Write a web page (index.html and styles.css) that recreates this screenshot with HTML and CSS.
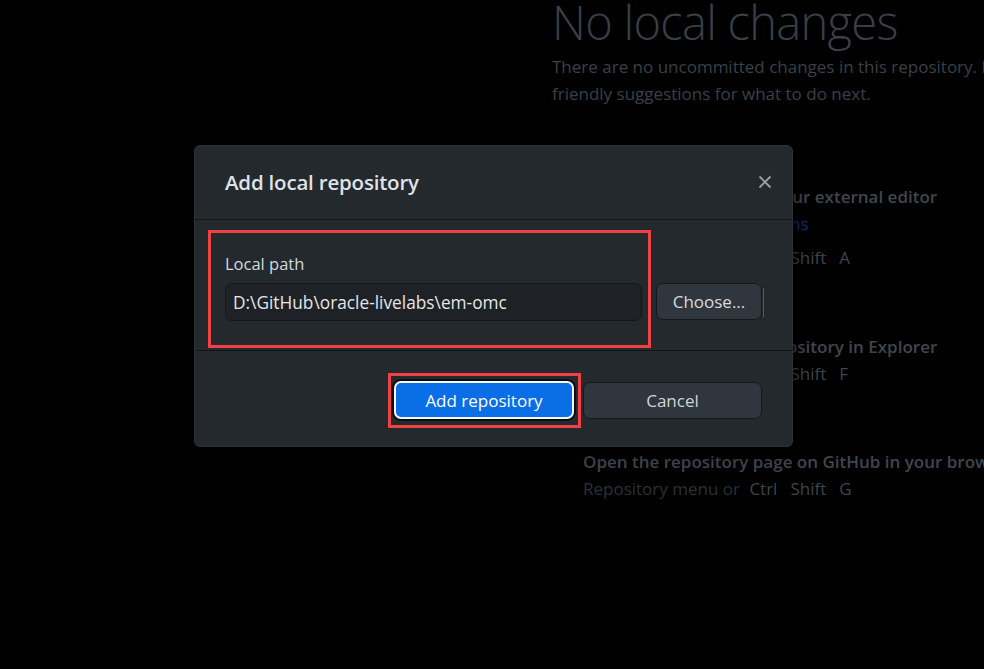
FILE: index.html
```html
<!DOCTYPE html>
<html>
<head>
<meta charset="utf-8">
<link rel="stylesheet" href="styles.css">
</head>
<body>
<div class="app">
  <div class="blank">
    <h1 class="big">No local changes</h1>
    <p class="lead">There are no uncommitted changes in this repository. Here are some</p>
    <p class="lead">friendly suggestions for what to do next.</p>
    <div class="actions">
      <div class="action a1">
        <div class="act-title">Open the repository in your external editor</div>
        <div class="act-link">Select your editor in Options</div>
        <div class="act-desc spaced">Repository menu or <span class="kbd">Ctrl</span><span class="kbd">Shift</span><span class="kbd">A</span></div>
      </div>
      <div class="action a2">
        <div class="act-title">View the files of your repository in Explorer</div>
        <div class="act-desc">Repository menu or <span class="kbd">Ctrl</span><span class="kbd">Shift</span><span class="kbd">F</span></div>
      </div>
      <div class="action a3">
        <div class="act-title">Open the repository page on GitHub in your browser</div>
        <div class="act-desc">Repository menu or <span class="kbd">Ctrl</span><span class="kbd">Shift</span><span class="kbd">G</span></div>
      </div>
    </div>
  </div>

  <div class="dialog">
    <div class="dlg-header">
      <h2 class="dlg-title">Add local repository</h2>
      <svg class="close" width="16" height="16" viewBox="0 0 16 16"><path d="M2.5 2.5 L13.5 13.5 M13.5 2.5 L2.5 13.5" stroke="#9aa0a6" stroke-width="1.8" fill="none"/></svg>
    </div>
    <div class="dlg-body">
      <div class="field">
        <label class="label">Local path</label>
        <div class="input">D:\GitHub\oracle-livelabs\em-omc</div>
      </div>
      <button class="btn choose">Choose...</button>
      <span class="sliver"></span>
    </div>
    <div class="dlg-footer">
      <button class="btn primary">Add repository</button>
      <button class="btn cancel">Cancel</button>
    </div>
    <div class="hl hl-path"></div>
    <div class="hl hl-add"></div>
  </div>
</div>
</body>
</html>
```
FILE: styles.css
```css
* { box-sizing: border-box; }
html, body { margin: 0; padding: 0; background: #000; }
body {
  width: 984px; height: 669px; overflow: hidden;
  font-family: "Open Sans", "Noto Sans", sans-serif;
}
.app { position: relative; width: 984px; height: 669px; overflow: hidden; }

.blank { padding-left: 552px; white-space: nowrap; }
.big {
  margin: -8px 0 0 0;
  font-size: 47px; font-weight: 300; color: #393f46;
  letter-spacing: -0.7px; line-height: 60px;
}
.lead { margin: 0; font-size: 17px; color: #3a4047; line-height: 27px; }
.lead:first-of-type { margin-top: 1px; }

.actions { margin-left: 31px; margin-top: 76px; }
.act-title { font-size: 17px; font-weight: 600; color: #40464d; line-height: 27px; }
.act-link { font-size: 17px; color: #0c2f7a; line-height: 27px; }
.act-desc { font-size: 17px; color: #2b3036; line-height: 27px; }
.act-desc.spaced { margin-top: 7px; }
.kbd { color: #3e454c; margin-left: 5px; }
.kbd + .kbd { margin-left: 13px; }
.a1 { height: 150px; }
.a2 { height: 115px; }
.a3 { height: 60px; }

.dialog {
  position: absolute; left: 194px; top: 145px;
  width: 599px; height: 302px;
  background: #24292e;
  border: 1px solid #2d3237;
  border-radius: 6px;
  box-shadow: 0 4px 16px rgba(0,0,0,0.8);
  display: flex; flex-direction: column;
}
.dlg-header {
  height: 74px; flex: none;
  display: flex; align-items: center; justify-content: space-between;
  padding: 0 19px 0 30px;
  border-bottom: 1px solid #141414;
}
.dlg-title {
  margin: 0 0 2px 0; font-size: 20.5px; font-weight: 600; color: #dfe2e6;
  letter-spacing: -0.2px;
}
.close { margin-top: -1px; }

.dlg-body {
  height: 131px; flex: none;
  display: flex; align-items: flex-end;
  padding: 0 0 29px 30px;
  border-bottom: 1px solid #141414;
}
.field { width: 417px; display: flex; flex-direction: column; }
.label { font-size: 16.5px; color: #d4d8dc; line-height: 20px; margin-bottom: 9px; margin-top: -1px; }
.input {
  height: 38px; background: #1e2125; border: 1px solid #15171a;
  border-radius: 7px; color: #e4e6e8; font-size: 17.3px;
  display: flex; align-items: center; padding-left: 7px;
}
.btn {
  font-family: inherit; font-size: 17px; border-radius: 7px; padding: 0;
  display: inline-flex; align-items: center; justify-content: center;
}
.choose {
  width: 106px; height: 37px; margin-left: 14px; margin-bottom: 1px;
  background: #2f363d; border: 1px solid #16191c; color: #d6dade;
}
.sliver {
  width: 2px; height: 29px; margin-left: 1px; margin-bottom: 4px;
  border-left: 1px solid #555b61; border-top: 1px solid #3a3f44; border-bottom: 1px solid #3a3f44;
}

.dlg-footer {
  flex: 1; display: flex; align-items: center; justify-content: flex-end;
  padding: 3px 30px 0 0; gap: 9px;
}
.primary {
  width: 180px; height: 38px;
  background: #0a6ee6; color: #fff;
  border: 2px solid #f4f6f8;
  box-shadow: 0 0 0 2px #0d0f11;
}
.cancel {
  width: 179px; height: 37px;
  background: #2f363d; border: 1px solid #16191c; color: #d0d4d8;
}

.hl { position: absolute; border: 3px solid #ef4343; pointer-events: none; }
.hl-path { left: 13px; top: 84px; width: 443px; height: 118px; }
.hl-add { left: 193px; top: 227px; width: 193px; height: 55px; }
```
